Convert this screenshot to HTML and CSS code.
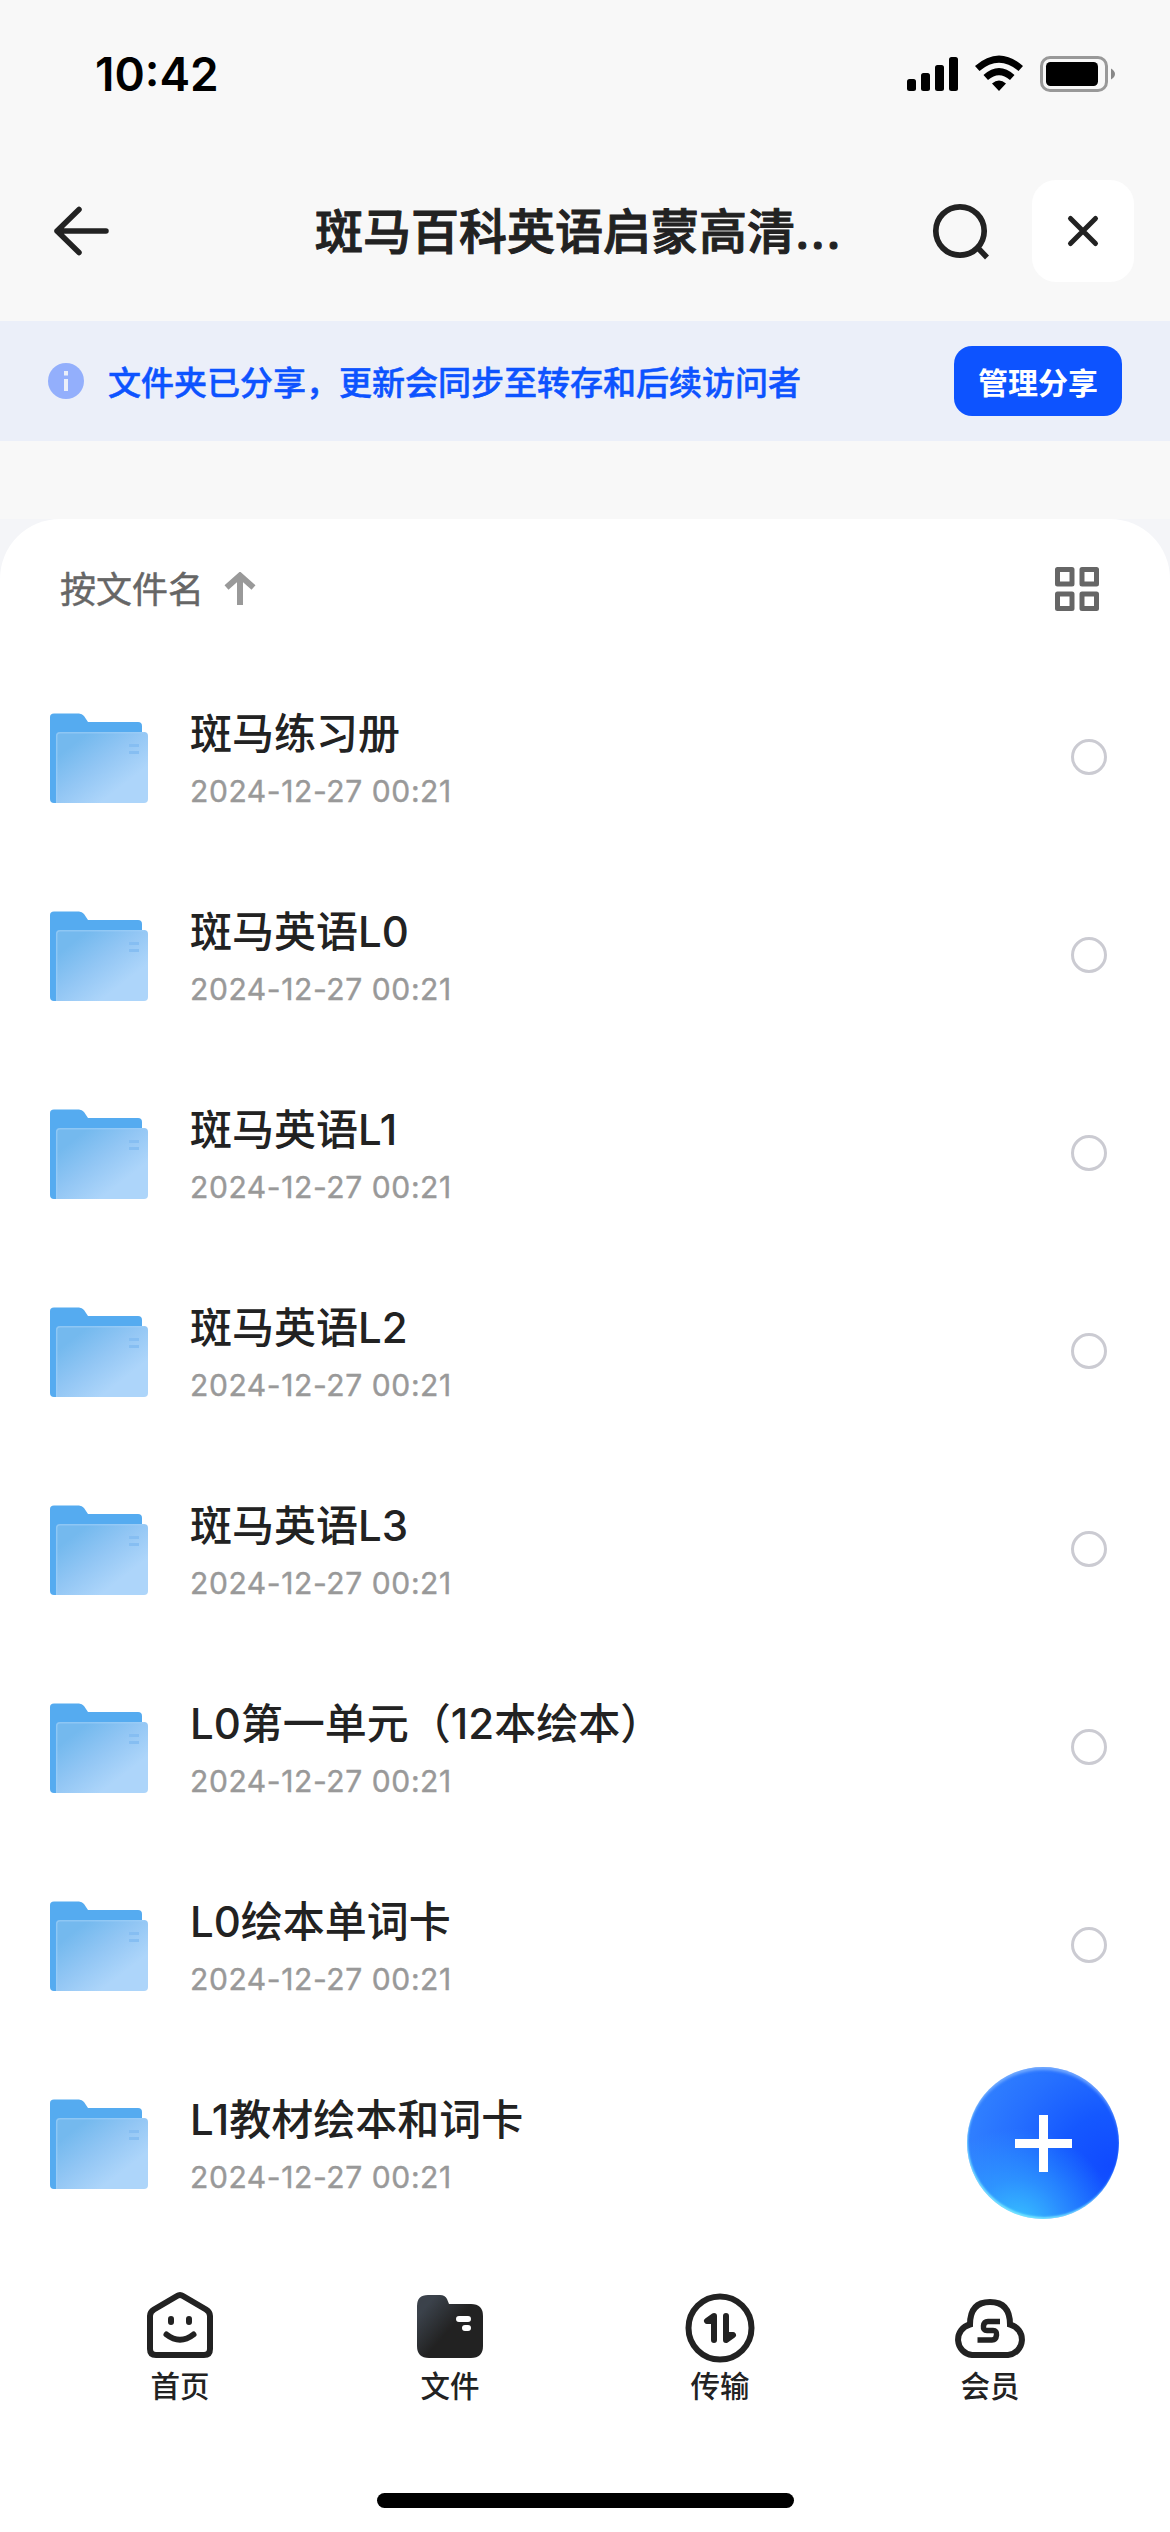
FILE: index.html
```html
<!DOCTYPE html>
<html lang="zh-CN">
<head>
<meta charset="utf-8">
<title>文件</title>
<link rel="stylesheet" href="styles.css">
</head>
<body>
<svg width="0" height="0" class="defs">
  <defs>
    <linearGradient id="front" x1="0.1" y1="0.1" x2="0.9" y2="0.9"><stop offset="0.1" stop-color="#74b9ee"/><stop offset="0.45" stop-color="#92c6f4"/><stop offset="0.8" stop-color="#add5fa"/></linearGradient>
    <linearGradient id="dark" x1="0" y1="0.1" x2="0.6" y2="0.6"><stop offset="0.2" stop-color="#3b424b"/><stop offset="0.85" stop-color="#222"/></linearGradient>
    <symbol id="folder" viewBox="0 0 98 90">
      <path d="M0 86V4Q0 .5 4 .5H29Q32 .5 34 3L38 9H88Q92 9 92 13V40L20 90H4Q0 90 0 86Z" fill="#55abf0"/>
      <path d="M6 90V23Q6 19 10 19H94Q98 19 98 23V86Q98 90 94 90Z" fill="url(#front)"/>
      <path d="M6.7 90V23Q6.700 19.700 10 19.700H94" fill="none" stroke="#a0d0f8" stroke-width="1.500" opacity=".6"/>
      <path d="M79 32.500H89M79 39.500H89" stroke="#86bef2" stroke-width="3"/>
    </symbol>
  </defs>
</svg>
<div class="screen">
  <div class="status">
    <span class="time">10:42</span>
    <svg width="210" height="40" viewBox="906 54 210 40">
      <rect x="907" y="79" width="9" height="12" rx="2.500"/><rect x="921" y="73" width="9" height="18" rx="2.500"/><rect x="935" y="65" width="9" height="26" rx="2.500"/><rect x="949" y="57" width="9" height="34" rx="2.500"/>
      <path d="M975 66Q999 45 1023 66L1018.500 71Q999 54.500 979.500 71ZM983.500 75Q999 61 1014.500 75L1010 80Q999 70.500 988 80ZM992 83.500Q999 77.500 1006 83.500L999 91Z"/>
      <rect x="1041.500" y="57.500" width="65" height="33" rx="8.500" fill="none" stroke="#999" stroke-width="3"/>
      <rect x="1046" y="62" width="52" height="24" rx="4.500"/>
      <path d="M1111 68.500Q1115 71 1115 74T1111 79.500Z" fill="#888"/>
    </svg>
  </div>
  <header class="header">
    <svg class="back" width="60" height="60" viewBox="51 201 60 60"><path d="M106 231H57M79 209.500L57 231L79 252.500" fill="none" stroke="#222" stroke-width="5.500" stroke-linecap="round" stroke-linejoin="round"/></svg>
    <h1 class="title">斑马百科英语启蒙高清<span class="dots">...</span></h1>
    <svg class="search" width="66" height="66" viewBox="927 198 66 66"><circle cx="960" cy="231" r="24.200" fill="none" stroke="#222" stroke-width="5.700"/><path d="M977 247L987 257.500" stroke="#222" stroke-width="5.500"/></svg>
    <button class="close"><svg width="34" height="34" viewBox="0 0 34 34"><path d="M4.500 4.500L29.500 29.500M29.500 4.500L4.500 29.500" stroke="#222" stroke-width="5" stroke-linecap="round"/></svg></button>
  </header>
  <div class="banner">
    <svg width="36" height="36" viewBox="0 0 36 36"><circle cx="18" cy="18" r="18" fill="#93affc"/><path d="M16 8h4v4.500h-4zM16 16h4v12h-4z" fill="#ebeff9"/></svg>
    <span class="notice">文件夹已分享，更新会同步至转存和后续访问者</span>
    <button class="manage">管理分享</button>
  </div>
  <div class="backdrop">
  <main class="card">
    <div class="sort">
      <span class="sort-label">按文件名</span>
      <svg class="up" width="32" height="34" viewBox="0 0 32 34"><path d="M16 33V4M2.500 15.500L16 3.500L29.500 15.500" fill="none" stroke="#999" stroke-width="6"/></svg>
      <svg width="44" height="44" viewBox="0 0 44 44"><path d="M2.500 2.500H17V17H2.500ZM27 2.500H41.500V17H27ZM2.500 27H17V41.500H2.500ZM27 27H41.500V41.500H27Z" fill="none" stroke="#666" stroke-width="5" stroke-linejoin="round"/></svg>
    </div>
    <ul class="list">
      <li class="row"><svg class="folder"><use href="#folder"/></svg><div class="info"><div class="name">斑马练习册</div><div class="date">2024-12-27 00:21</div></div><i class="radio"></i></li>
      <li class="row"><svg class="folder"><use href="#folder"/></svg><div class="info"><div class="name">斑马英语L0</div><div class="date">2024-12-27 00:21</div></div><i class="radio"></i></li>
      <li class="row"><svg class="folder"><use href="#folder"/></svg><div class="info"><div class="name">斑马英语L1</div><div class="date">2024-12-27 00:21</div></div><i class="radio"></i></li>
      <li class="row"><svg class="folder"><use href="#folder"/></svg><div class="info"><div class="name">斑马英语L2</div><div class="date">2024-12-27 00:21</div></div><i class="radio"></i></li>
      <li class="row"><svg class="folder"><use href="#folder"/></svg><div class="info"><div class="name">斑马英语L3</div><div class="date">2024-12-27 00:21</div></div><i class="radio"></i></li>
      <li class="row"><svg class="folder"><use href="#folder"/></svg><div class="info"><div class="name">L0第一单元（12本绘本）</div><div class="date">2024-12-27 00:21</div></div><i class="radio"></i></li>
      <li class="row"><svg class="folder"><use href="#folder"/></svg><div class="info"><div class="name">L0绘本单词卡</div><div class="date">2024-12-27 00:21</div></div><i class="radio"></i></li>
      <li class="row"><svg class="folder"><use href="#folder"/></svg><div class="info"><div class="name">L1教材绘本和词卡</div><div class="date">2024-12-27 00:21</div></div></li>
    </ul>
  </main>
  </div>
  <nav class="tabs">
    <a class="tab"><svg width="76" height="76" viewBox="142 2287 76 76"><path d="M177 2296Q180 2294 183 2296L206 2309.500Q210 2312 210 2316V2349Q210 2355 204 2355H156Q150 2355 150 2349V2316Q150 2312 154 2309.500Z" fill="none" stroke="#222" stroke-width="6"/><path d="M171 2319V2322M189 2319V2322" stroke="#222" stroke-width="6" stroke-linecap="round"/><path d="M166.500 2334.500Q180 2345 193.500 2334.500" fill="none" stroke="#222" stroke-width="6" stroke-linecap="round"/></svg><span>首页</span></a>
    <a class="tab"><svg width="76" height="76" viewBox="412 2287 76 76"><path d="M417 2306Q417 2295 428 2295H440Q445 2295 447 2299L449 2304H471Q483 2304 483 2316V2346Q483 2358 471 2358H429Q417 2358 417 2346Z" fill="url(#dark)"/><path d="M459 2319H468M465 2328H468" stroke="#fff" stroke-width="6" stroke-linecap="round"/></svg><span>文件</span></a>
    <a class="tab"><svg width="76" height="76" viewBox="682 2287 76 76"><circle cx="720" cy="2328" r="31.500" fill="none" stroke="#222" stroke-width="6"/><path d="M714 2340V2316L707 2321H714M726 2316V2340L733 2335H726" fill="#222" stroke="#222" stroke-width="6" stroke-linecap="round" stroke-linejoin="round"/></svg><span>传输</span></a>
    <a class="tab"><svg width="76" height="76" viewBox="952 2287 76 76"><path d="M972 2355A15.500 15.500 0 0 1 970 2324.500Q970 2302 990 2302T1010 2324.500A15.500 15.500 0 0 1 1008 2355Z" fill="none" stroke="#222" stroke-width="6"/><path d="M1000 2321.500H988Q984 2321.500 983.500 2326Q983 2330.500 987 2330.500H993Q997 2330.500 996.500 2335Q996 2340 992 2340H977.500" fill="none" stroke="#222" stroke-width="5.500"/></svg><span>会员</span></a>
  </nav>
  <div class="home-bar"></div>
  <button class="add"><svg width="57" height="57" viewBox="0 0 57 57"><path d="M28.500 0V57M0 28.500H57" stroke="#fff" stroke-width="9"/></svg></button>
</div>
</body>
</html>
```
FILE: styles.css
```css
* { box-sizing: border-box; margin: 0; padding: 0; }
body { width: 1170px; height: 2532px; overflow: hidden; background: #f8f8f8; color: #222; font-family: Inter, "Noto Sans CJK SC", sans-serif; }
.defs { position: absolute; }
button { border: 0; font: inherit; display: flex; align-items: center; justify-content: center; }
.screen { position: relative; height: 2532px; display: flex; flex-direction: column; }
.status { height: 150px; padding: 54px 54px 0 95px; display: flex; justify-content: space-between; align-items: flex-start; color: #000; }
.time { font-size: 46px; line-height: 41px; font-weight: 600; }
.header { height: 171px; padding: 30px 36px 0 51px; display: flex; align-items: flex-start; }
.back { margin-top: 21px; }
.title { margin-left: 204px; width: 612px; height: 102px; font-size: 48px; line-height: 104px; font-weight: 500; -webkit-text-stroke: 1px #222; white-space: nowrap; }
.dots { letter-spacing: 1px; }
.search { margin-top: 18px; flex: none; }
.close { margin-left: 39px; width: 102px; height: 102px; flex: none; border-radius: 24px; background: #fff; }
.banner { height: 120px; padding: 0 48px; background: #ebeff9; display: flex; align-items: center; }
.notice { margin-left: 24px; padding-top: 3px; flex: 1; font-size: 33px; line-height: 60px; font-weight: 500; -webkit-text-stroke: .5px #0d53ff; color: #0d53ff; white-space: nowrap; }
.manage { width: 168px; height: 70px; border-radius: 18px; background: #0d53ff; color: #fff; font-size: 30px; font-weight: 700; padding-bottom: 1px; }
.backdrop { margin-top: 78px; background: linear-gradient(#f4f5f8 100px, #fff 100px); }
.card { height: 1711px; border-radius: 60px 60px 0 0; background: #fff; overflow: hidden; }
.sort { height: 140px; padding: 0 71px 0 60px; display: flex; align-items: center; font-size: 36px; color: #666; }
.sort-label { padding-bottom: 5px; -webkit-text-stroke: .5px #666; }
.up { margin: 0 auto 0 20px; }
.list { list-style: none; }
.row { height: 198px; padding: 0 63px 0 50px; display: flex; align-items: center; }
.folder { width: 98px; height: 90px; flex: none; }
.info { flex: 1; margin-left: 42px; display: flex; flex-direction: column; gap: 6px; }
.name { font-size: 42px; line-height: 60px; height: 60px; font-weight: 500; white-space: nowrap; }
.date { font-size: 30px; line-height: 42px; color: #999; letter-spacing: .6px; -webkit-text-stroke: .4px #999; }
.radio { width: 36px; height: 36px; margin-bottom: 2px; border: 3px solid #cbcbd2; border-radius: 50%; }
.tabs { height: 250px; padding: 57px 45px 0; background: #fff; display: flex; }
.tab { flex: 1; display: flex; flex-direction: column; align-items: center; font-size: 29.5px; line-height: 46px; font-weight: 500; }
.home-bar { height: 52px; padding-top: 13px; background: #fff; }
.home-bar::before { content: ""; display: block; width: 417px; height: 15px; margin: 0 auto; border-radius: 8px; background: #000; }
.add { position: absolute; left: 967px; top: 2067px; width: 152px; height: 152px; border-radius: 50%; background: radial-gradient(circle at 33% 105%, #38c4ff 0, rgba(48,160,255,.7) 25%, transparent 52%), radial-gradient(circle at 95% 65%, #104aff 0, #1558ff 30%, #2670ff 60%, #378aff 100%); box-shadow: inset 0 4px 3px -1px rgba(150,195,255,.65), inset 1px -2px 2px rgba(130,240,255,.8); }
```
